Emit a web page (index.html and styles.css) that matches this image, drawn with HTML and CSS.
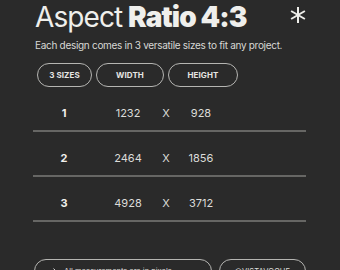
FILE: index.html
```html
<!DOCTYPE html>
<html>
<head>
<meta charset="utf-8">
<link rel="stylesheet" href="styles.css">
</head>
<body>
<div class="page">
  <header class="head">
    <h1 class="title"><span class="light">Aspect</span> <b>Ratio 4:3</b></h1>
    <svg class="star" width="16" height="16" viewBox="0 0 16 16">
      <g stroke="#eeeeea" stroke-width="2" stroke-linecap="butt">
        <line x1="8" y1="0" x2="8" y2="16"/>
        <line x1="1.1" y1="4" x2="14.9" y2="12"/>
        <line x1="1.1" y1="12" x2="14.9" y2="4"/>
      </g>
    </svg>
  </header>
  <p class="sub">Each design comes in 3 versatile sizes to fit any project.</p>
  <div class="pills">
    <span class="pill p1">3 SIZES</span>
    <span class="pill p2">WIDTH</span>
    <span class="pill p3">HEIGHT</span>
  </div>
  <div class="table">
    <div class="row"><span class="n">1</span><span class="w">1232</span><span class="x">X</span><span class="h">928</span></div>
    <div class="row"><span class="n">2</span><span class="w">2464</span><span class="x">X</span><span class="h">1856</span></div>
    <div class="row"><span class="n">3</span><span class="w">4928</span><span class="x">X</span><span class="h">3712</span></div>
  </div>
  <footer class="foot">
    <div class="fpill note">
      <svg class="arrow" width="13" height="6" viewBox="0 0 13 6">
        <path d="M0 3H12M9.5 0.6L12 3L9.5 5.4" fill="none" stroke="#ddd" stroke-width="1"/>
      </svg>
      <span>All measurements are in pixels</span>
    </div>
    <div class="fpill handle">@VISTAVOGUE</div>
  </footer>
</div>
</body>
</html>
```
FILE: styles.css
```css
* { box-sizing: border-box; }
html, body { margin: 0; padding: 0; }
body {
  background: #2a2a2a;
  color: #ececea;
  font-family: Inter, "Noto Sans", sans-serif;
  width: 340px;
  height: 270px;
  overflow: hidden;
}
.page {
  padding: 0 34px 0 33px;
}
.head {
  display: flex;
  justify-content: space-between;
  align-items: flex-start;
}
.title {
  margin: 0 0 0 2px;
  font-size: 28px;
  line-height: 34px;
  font-weight: 700;
  letter-spacing: -0.9px;
  color: #efefec;
  white-space: nowrap;
}
.title .light { font-weight: 400; }
.star { margin-top: 7px; }
.sub {
  margin: 4px 0 0 2px;
  font-size: 10px;
  line-height: 14px;
  color: #d8d8d5;
  letter-spacing: -0.3px;
  white-space: nowrap;
}
.pills {
  display: flex;
  gap: 4px;
  margin: 11px 0 0 4px;
}
.pill {
  height: 24px;
  border: 1.5px solid #b5b5b2;
  border-radius: 12px;
  display: flex;
  align-items: center;
  justify-content: center;
  font-size: 8px;
  font-weight: 700;
  color: #e6e6e3;
  letter-spacing: 0.1px;
}
.p1 { width: 55px; }
.p2 { width: 68px; }
.p3 { width: 70px; }
.row {
  display: grid;
  grid-template-columns: 62px 66px 10px 60px 1fr;
  height: 45px;
  padding: 19px 0 0;
  border-bottom: 2px solid #666664;
  font-size: 11px;
  line-height: 14px;
  color: #dcdcd9;
}
.row span { text-align: center; }
.row .n { font-weight: 700; color: #f0f0ed; }
.foot {
  display: flex;
  gap: 7px;
  margin: 37px 0 0 1px;
}
.fpill {
  height: 24px;
  border: 1.5px solid #b5b5b2;
  border-radius: 12px;
  display: flex;
  align-items: center;
  font-size: 7.5px;
  color: #dcdcd9;
}
.note { width: 178px; padding-left: 9px; gap: 7px; }
.handle { width: 87px; justify-content: center; letter-spacing: 0.1px; }
```
